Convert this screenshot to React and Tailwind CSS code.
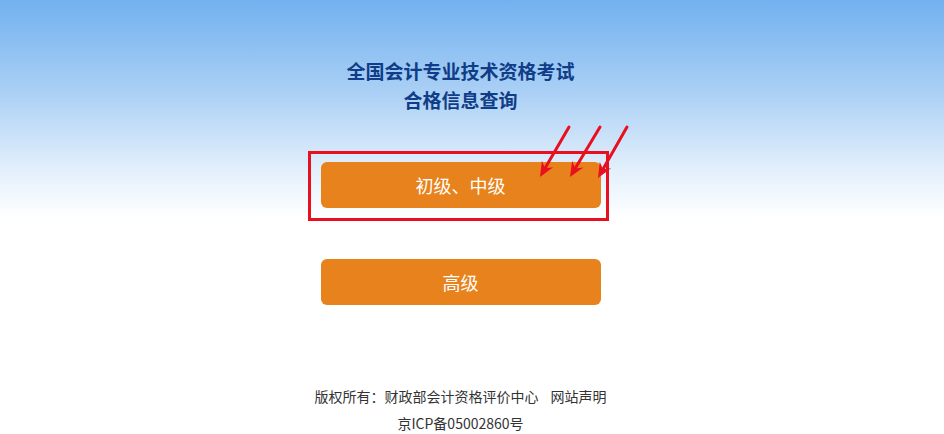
function Arrow({ x1, y1, x2, y2 }) {
  // arrow pointing from (x1,y1) to tip (x2,y2)
  const dx = x2 - x1;
  const dy = y2 - y1;
  const len = Math.sqrt(dx * dx + dy * dy);
  const ux = dx / len;
  const uy = dy / len;
  const px = -uy;
  const py = ux;
  const head = 15;
  const half = 6.5;
  const bx = x2 - ux * head;
  const by = y2 - uy * head;
  const nx = x2 - ux * 10;
  const ny = y2 - uy * 10;
  const pts = [
    [x2, y2],
    [bx + px * half, by + py * half],
    [nx, ny],
    [bx - px * half, by - py * half],
  ]
    .map((p) => p.join(","))
    .join(" ");
  return (
    <g>
      <line x1={x1} y1={y1} x2={nx} y2={ny} stroke="#e8101e" strokeWidth="3" strokeLinecap="round" />
      <polygon points={pts} fill="#e8101e" />
    </g>
  );
}

export default function App() {
  return (
    <div
      className="w-full h-[434px] overflow-hidden bg-[linear-gradient(to_bottom,#72b1ef_0px,#a9cff5_90px,#e4f0fc_172px,#ffffff_218px)]"
      style={{ fontFamily: '"Microsoft YaHei", "Noto Sans CJK SC", sans-serif' }}
    >
      <div className="flex flex-col items-center pr-[23px] pt-[56px]">
        <h1 className="text-[19px] leading-[29px] font-bold text-[#103d87] text-center">
          全国会计专业技术资格考试
          <br />
          合格信息查询
        </h1>

        <div className="relative mt-[48px]">
          <button className="w-[280px] h-[46px] rounded-[6px] bg-[#e8821c] text-white text-[18px]">
            初级、中级
          </button>
          <div className="absolute left-[-13px] top-[-11px] w-[301px] h-[70px] border-[3px] border-[#e8101e] pointer-events-none" />
          <svg
            className="absolute left-[209px] top-[-42px] pointer-events-none"
            width="110"
            height="70"
            viewBox="0 0 110 70"
          >
            <Arrow x1={39} y1={7} x2={10} y2={57} />
            <Arrow x1={70} y1={7} x2={40} y2={57} />
            <Arrow x1={97} y1={7} x2={68} y2={58} />
          </svg>
        </div>

        <button className="mt-[51px] w-[280px] h-[46px] rounded-[6px] bg-[#e8821c] text-white text-[18px]">
          高级
        </button>

        <div className="mt-[78px] text-[14px] leading-[27px] text-[#333333] text-center">
          <p>
            版权所有：财政部会计资格评价中心<span className="ml-[12px]">网站声明</span>
          </p>
          <p>京ICP备05002860号</p>
        </div>
      </div>
    </div>
  );
}
